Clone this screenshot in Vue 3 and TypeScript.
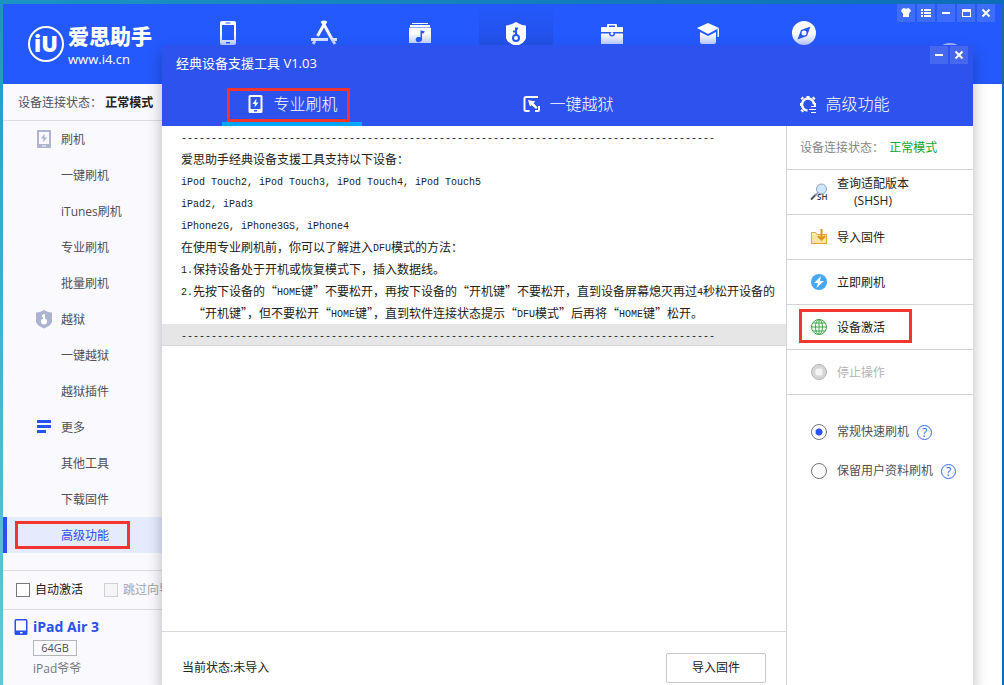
<script setup lang="ts">
import { ref } from 'vue'

interface SideItem {
  label: string
  icon?: 'flash' | 'shield' | 'more'
  active?: boolean
}

interface Run {
  text: string
  latin: boolean
}

const sideItems: SideItem[] = [
  { label: '刷机', icon: 'flash' },
  { label: '一键刷机' },
  { label: 'iTunes刷机' },
  { label: '专业刷机' },
  { label: '批量刷机' },
  { label: '越狱', icon: 'shield' },
  { label: '一键越狱' },
  { label: '越狱插件' },
  { label: '更多', icon: 'more' },
  { label: '其他工具' },
  { label: '下载固件' },
  { label: '高级功能', active: true },
]

const rule = '-'.repeat(89)
const logLines: string[] = [
  rule,
  '爱思助手经典设备支援工具支持以下设备：',
  'iPod Touch2, iPod Touch3, iPod Touch4, iPod Touch5',
  'iPad2, iPad3',
  'iPhone2G, iPhone3GS, iPhone4',
  '在使用专业刷机前，你可以了解进入DFU模式的方法：',
  '1.保持设备处于开机或恢复模式下，插入数据线。',
  '2.先按下设备的“HOME键”不要松开，再按下设备的“开机键”不要松开，直到设备屏幕熄灭再过4秒松开设备的',
  '  “开机键”，但不要松开“HOME键”，直到软件连接状态提示“DFU模式”后再将“HOME键”松开。',
  rule,
]

// Latin runs take a half-width face so that two letters equal one Chinese character.
function runs(line: string): Run[] {
  return (line.match(/[\x20-\x7e]+|[^\x20-\x7e]+/g) ?? []).map((text) => ({
    text,
    latin: /^[\x20-\x7e]/.test(text),
  }))
}

const mode = ref<'fast' | 'keep'>('fast')
const autoActivate = ref(false)
</script>

<template>
  <div class="desktop">
    <div class="window">
      <header class="topbar">
        <div class="brand">
          <span class="brand-mark">iU</span>
          <span class="brand-text">
            <strong>爱思助手</strong>
            <span>www.i4.cn</span>
          </span>
        </div>
        <nav class="topnav" aria-label="主导航">
          <button type="button" aria-label="设备">
            <svg viewBox="0 0 28 28">
              <defs>
                <linearGradient id="fade" x1="0" y1="0" x2="0" y2="28" gradientUnits="userSpaceOnUse">
                  <stop offset="0.5" stop-color="#fff" />
                  <stop offset="1" stop-color="#a9bdff" />
                </linearGradient>
              </defs>
              <path fill="url(#fade)" fill-rule="evenodd" d="M8 2h12q2 0 2 2v20q0 2-2 2H8q-2 0-2-2V4q0-2 2-2zM8 6v15h12V6zM11.500 3.500v1h5v-1zM12 23v1.500h4V23z" />
            </svg>
          </button>
          <button type="button" aria-label="应用">
            <svg viewBox="0 0 28 28" fill="none" stroke="url(#fade)" stroke-width="3">
              <path d="M12 2l11 20M16 2L7.500 17" />
              <path d="M1 20.500h17M22.500 20.500H27" />
              <path d="M5 22l-2 3" />
              <path d="M23 22l2 3" />
            </svg>
          </button>
          <button type="button" aria-label="音乐">
            <svg viewBox="0 0 28 28" fill="url(#fade)">
              <path d="M6 4h16v1H6zM4 6h20v2H4z" />
              <path fill-rule="evenodd" d="M4 8.500h20q1 0 1 1V24H3V9.500q0-1 1-1zM14.500 11v7.300a3.200 2.700 0 1 0 1.500 2.200V14.500q2 .2 2.500-1.500V12q-3 0-4-1z" />
            </svg>
          </button>
          <button type="button" class="current" aria-label="刷机越狱">
            <svg viewBox="0 0 28 28">
              <path fill="#fff" d="M14 3q6 3.500 10 3.500V19q-1 5-10 8Q5 24 4 19V6.500Q8 6.500 14 3z" />
              <circle cx="14" cy="19" r="3" fill="none" stroke="#2458f4" stroke-width="2" />
              <path d="M14 16V8.500M14 9.500h2M14 12.500h-3" fill="none" stroke="#2458f4" stroke-width="2" />
            </svg>
          </button>
          <button type="button" aria-label="工具箱">
            <svg viewBox="0 0 28 28" fill="url(#fade)">
              <path fill-rule="evenodd" d="M9 8V6q0-1 1-1h8q1 0 1 1v2h5q1 0 1 1v4H3V9q0-1 1-1zM11 8h6V6.500h-6z" />
              <path d="M3 14.500h8a3 3 0 0 0 6 0h8V25H3z" />
              <circle cx="14" cy="14.500" r="1.500" />
            </svg>
          </button>
          <button type="button" aria-label="教程">
            <svg viewBox="0 0 28 28" fill="url(#fade)">
              <path d="M14 4l11 5-11 6L3 9z" />
              <path d="M6 13l8 4 8-4v10q0 2-2 2H8q-2 0-2-2z" />
              <path d="M23.500 9.500H25V18h-1.500z" />
            </svg>
          </button>
          <button type="button" aria-label="浏览">
            <svg viewBox="0 0 28 28">
              <circle cx="14" cy="14" r="12" fill="url(#fade)" />
              <path fill="#2858f8" fill-rule="evenodd" d="M20.500 7.500L17 17l-9.500 3.500L11 11zM14 11.500a2.500 2.500 0 1 0 0 5 2.500 2.500 0 0 0 0-5z" />
            </svg>
          </button>
        </nav>
        <div class="topbar-end">
          <div class="controls">
            <button type="button" aria-label="皮肤">
              <svg viewBox="0 0 18 18"><path fill="#fff" d="M5 5l2-1q2 1.500 4 0l2 1 1 2-2 2.500V13H6V9.500L4 7z" /></svg>
            </button>
            <button type="button" aria-label="菜单">
              <svg viewBox="0 0 18 18"><path fill="#fff" d="M4 5h2v2H4zM7 5h7v2H7zM4 8h2v2H4zM7 8h7v2H7zM4 11h2v2H4zM7 11h7v2H7z" /></svg>
            </button>
            <button type="button" aria-label="最小化">
              <svg viewBox="0 0 18 18"><path fill="#fff" d="M5 8h8v2H5z" /></svg>
            </button>
            <button type="button" aria-label="最大化">
              <svg viewBox="0 0 18 18"><path fill="#fff" fill-rule="evenodd" d="M5 5h9v8H5zM6 8v4h7V8z" /></svg>
            </button>
            <button type="button" aria-label="关闭">
              <svg viewBox="0 0 18 18"><path stroke="#fff" stroke-width="2" d="M5.500 5.500l7 7M12.500 5.500l-7 7" /></svg>
            </button>
          </div>
          <button type="button" class="download" aria-label="下载">
            <svg viewBox="0 0 32 32" fill="none" stroke="#9db4ff" stroke-width="2"><circle cx="16" cy="16" r="14" /><path d="M16 9v13M11 17l5 5 5-5" /></svg>
          </button>
        </div>
      </header>

      <aside class="sidebar">
        <p class="side-status">设备连接状态： <strong>正常模式</strong></p>
        <nav class="side-nav" aria-label="功能">
          <a v-for="item in sideItems" :key="item.label" href="#" :class="{ active: item.active }">
            <span class="side-icon">
              <svg v-if="item.icon === 'flash'" viewBox="0 0 18 20">
                <path fill="#adb4d2" fill-rule="evenodd" d="M3 1h12q1 0 1 1v16q0 1-1 1H3q-1 0-1-1V2q0-1 1-1zM4 3v12h10V3zM7 16.500v1h4v-1z" />
                <path fill="#adb4d2" d="M9.500 4.500L6 9.500h2.500L8 13.500l4-5H9.500z" />
              </svg>
              <svg v-else-if="item.icon === 'shield'" viewBox="0 0 18 20">
                <path fill="#adb4d2" d="M9 1q4 2.500 8 2.500V13q-1 3.500-8 6.500Q2 16.500 1 13V3.500Q5 3.500 9 1z" />
                <circle cx="9" cy="12.500" r="3" fill="#fff" />
                <path fill="#fff" d="M8 5h2v6H8zM7 6h1v2H7z" />
              </svg>
              <svg v-else-if="item.icon === 'more'" viewBox="0 0 18 20">
                <path fill="#2554f0" d="M2 3h14v3H2zM2 8h14v3H2zM2 13h9v3H2z" />
              </svg>
            </span>
            <span class="side-label">{{ item.label }}</span>
          </a>
        </nav>
        <div class="side-options">
          <label><input v-model="autoActivate" type="checkbox" />自动激活</label>
          <label class="off"><input type="checkbox" disabled />跳过向导</label>
        </div>
        <div class="device">
          <svg viewBox="0 0 14 18"><path fill="#2a50ee" fill-rule="evenodd" d="M2 1h10q1.500 0 1.500 1.500v13Q13.500 17 12 17H2Q.5 17 .5 15.500v-13Q.5 1 2 1zM2 2.500v10h10v-10zM6 14v1.500h2.500V14z" /></svg>
          <strong>iPad Air 3</strong>
          <span class="capacity">64GB</span>
          <span class="owner">iPad爷爷</span>
        </div>
      </aside>
    </div>

    <section class="dialog" role="dialog" aria-label="经典设备支援工具">
      <header class="dialog-head">
        <div class="dialog-title">
          <h1>经典设备支援工具 V1.03</h1>
          <div class="controls">
            <button type="button" aria-label="最小化窗口">
              <svg viewBox="0 0 18 18"><path fill="#fff" d="M5 8h8v2H5z" /></svg>
            </button>
            <button type="button" aria-label="关闭窗口">
              <svg viewBox="0 0 18 18"><path stroke="#fff" stroke-width="2" d="M5.500 5.500l7 7M12.500 5.500l-7 7" /></svg>
            </button>
          </div>
        </div>
        <nav class="tabs" aria-label="工具">
          <button type="button" class="selected">
            <svg viewBox="0 0 18 18">
              <path fill="#fff" fill-rule="evenodd" d="M4 0h11q1.500 0 1.500 1.500v15Q16.500 18 15 18H4q-1.500 0-1.500-1.500v-15Q2.500 0 4 0zM4.500 2v12H14.500V2zM8 15v1.500h3V15z" />
              <path fill="#fff" d="M10.500 3.500L6.500 9H9l-.5 3.500 4-5H10z" />
            </svg>
            专业刷机
          </button>
          <button type="button">
            <svg viewBox="0 0 18 18">
              <path fill="none" stroke="#fff" stroke-width="2" d="M16 2H4Q2.500 2 2.500 3.500v11Q2.500 16 4 16H7.500M13 16h3q1 0 1-1.500V11" />
              <path fill="#fff" d="M6 5l7.500 1.500-2 1.500 4 4.500-1.500 1.500-4.500-4L8 11.500z" />
            </svg>
            一键越狱
          </button>
          <button type="button">
            <svg viewBox="0 0 18 18">
              <path fill="none" stroke="#fff" stroke-width="2.500" d="M9.500 15.500A6 6 0 1 1 16 9.500" />
              <path fill="none" stroke="#fff" stroke-width="3" d="M10 1v3M5 4L3.500 2.500M2 9.500h3M3.500 16.500L5 15M15 4l1.500-1.500M18 9.500h-2" />
              <path fill="#fff" d="M13 11h5v1h-5zM11 14h7v1h-7zM13 17h5v1h-5z" />
            </svg>
            高级功能
          </button>
        </nav>
      </header>

      <main class="console">
        <div class="log">
          <p v-for="(line, i) in logLines" :key="i" :class="{ marked: i === logLines.length - 1 }"><span v-for="(run, j) in runs(line)" :key="j" :class="{ latin: run.latin }">{{ run.text }}</span></p>
        </div>
        <footer class="console-foot">
          <span>当前状态:未导入</span>
          <button type="button">导入固件</button>
        </footer>
      </main>

      <aside class="actions">
        <p class="action-status">设备连接状态： <b>正常模式</b></p>
        <button type="button" class="action">
          <svg viewBox="0 0 18 18">
            <path stroke="#4c5866" stroke-width="2" d="M1 16.500l5-5" />
            <path stroke="#8996a5" stroke-width="1.500" d="M5 12.500l3-3" />
            <circle cx="11.500" cy="6" r="5" fill="#cfe6fa" stroke="#92a5b8" />
            <text x="7" y="17" class="sh-text">SH</text>
          </svg>
          <span>查询适配版本<br />(SHSH)</span>
        </button>
        <button type="button" class="action">
          <svg viewBox="0 0 18 18">
            <path fill="#fbe3a0" stroke="#dfa73a" d="M1.500 4.500h4l1.500 2h9.500v9h-15z" />
            <path fill="#fff1c9" d="M2 5h3v2H2z" />
            <path fill="none" stroke="#d8961f" stroke-width="2" d="M11.500 1v9M8 8l3.500 3.500L15 8" />
          </svg>
          <span>导入固件</span>
        </button>
        <button type="button" class="action">
          <svg viewBox="0 0 18 18">
            <circle cx="9" cy="9" r="8" fill="#45a7f5" />
            <path fill="#fff" d="M11 3L4 10h4l-1.500 5L14 8h-4z" />
          </svg>
          <span>立即刷机</span>
        </button>
        <button type="button" class="action boxed">
          <svg viewBox="0 0 18 18" fill="none" stroke="#3fa648">
            <circle cx="9" cy="9" r="7.500" />
            <ellipse cx="9" cy="9" rx="3.500" ry="7.500" />
            <path d="M9 1.500v15M1.500 9h15M3 5h12M3 13h12" />
          </svg>
          <span>设备激活</span>
        </button>
        <button type="button" class="action" disabled>
          <svg viewBox="0 0 18 18">
            <circle cx="9" cy="9" r="7.500" fill="#d6d6d6" stroke="#b5b5b5" />
            <rect x="5.500" y="5.500" width="7" height="7" rx="2" fill="#f4f4f4" />
          </svg>
          <span>停止操作</span>
        </button>
        <div class="modes">
          <div class="mode">
            <label><input v-model="mode" type="radio" name="mode" value="fast" />常规快速刷机</label>
            <button type="button" class="help" aria-label="常规快速刷机说明">?</button>
          </div>
          <div class="mode">
            <label><input v-model="mode" type="radio" name="mode" value="keep" />保留用户资料刷机</label>
            <button type="button" class="help" aria-label="保留用户资料刷机说明">?</button>
          </div>
        </div>
      </aside>
    </section>
  </div>
</template>

<style>
html,
body,
#app {
  height: 100%;
}

body {
  margin: 0;
  overflow: hidden;
}
</style>

<style scoped>
*,
*::after {
  box-sizing: border-box;
}

p,
h1 {
  margin: 0;
}

button {
  padding: 0;
  border: 0;
  background: none;
  color: inherit;
  font: inherit;
}

svg {
  display: block;
  flex: none;
}

.desktop {
  position: relative;
  height: 100%;
  padding: 4px 2px 0 3px;
  overflow: hidden;
  background:
    linear-gradient(90deg, transparent 50%, #1c68ab 50%) 0 4px no-repeat,
    linear-gradient(90deg, #1a93c4, #0c6db9) 0 0 / 100% 4px no-repeat,
    linear-gradient(#1a93c4, #34a6cc 25%, #68c4dc);
  color: #505058;
  font: 12px/18px 'Open Sans', 'Noto Sans CJK SC', sans-serif;
}

.window {
  display: flex;
  flex-direction: column;
  height: 100%;
  background: #fff;
}

.topbar {
  display: flex;
  flex: none;
  height: 80px;
  background: #2459fd;
  color: #fff;
}

.brand {
  display: flex;
  flex: none;
  align-items: center;
  gap: 4px;
  width: 188px;
  padding-left: 25px;
}

.brand-mark {
  width: 36px;
  height: 36px;
  border: 2px solid #fff;
  border-radius: 50%;
  font-size: 22px;
  font-weight: 800;
  line-height: 31px;
  text-align: center;
}

.brand-text {
  display: flex;
  flex-direction: column;
  font-size: 13px;
  line-height: 18px;
  white-space: nowrap;
}

.brand-text strong {
  font-family: 'Noto Sans CJK SC', sans-serif;
  font-size: 21px;
  font-weight: 900;
  line-height: 30px;
}

.topnav {
  display: flex;
  flex: none;
  gap: 22px;
}

.topnav button {
  width: 74px;
  padding-top: 15px;
}

.topnav button.current {
  background: linear-gradient(#2459fd, #2350e6 41px);
}

.topnav button,
.topbar-end,
.controls button {
  display: flex;
  flex-direction: column;
  align-items: center;
}

.topnav svg {
  width: 28px;
  height: 28px;
}

.topbar-end {
  flex: 1;
  align-items: flex-end;
  padding-right: 7px;
}

.controls {
  display: flex;
  gap: 2px;
}

.controls button {
  width: 18px;
  height: 18px;
  background: rgba(255, 255, 255, 0.12);
}

.controls svg {
  width: 18px;
  height: 18px;
}

.download {
  margin: 20px 29px 0 0;
}

.download svg {
  width: 32px;
  height: 32px;
}

.sidebar {
  display: flex;
  flex: 1;
  flex-direction: column;
  width: 200px;
  background: #f9f9fe;
}

.side-status {
  height: 37px;
  padding-left: 15px;
  border-bottom: 1px solid #dcdce2;
  line-height: 37px;
  white-space: nowrap;
}

.side-status strong {
  color: #222;
}

.side-nav {
  padding-bottom: 17px;
}

.side-nav a {
  display: flex;
  align-items: center;
  height: 36px;
  color: inherit;
  text-decoration: none;
}

.side-nav a.active {
  position: relative;
  background: #e5ebfd;
  color: #2a50ee;
  box-shadow: inset 4px 0 #2a50ee;
}

.side-nav a.active::after {
  position: absolute;
  top: 4px;
  left: 12px;
  width: 115px;
  height: 28px;
  border: 3px solid #f2352e;
  content: '';
}

.side-icon {
  width: 58px;
  padding-left: 32px;
}

.side-icon svg {
  width: 18px;
  height: 20px;
}

.side-label {
  line-height: 20px;
  padding-top: 2px;
}

.side-options {
  display: flex;
  align-items: center;
  gap: 21px;
  height: 40px;
  padding-left: 13px;
  border: solid #dcdce2;
  border-width: 1px 0;
  color: #222;
  white-space: nowrap;
}

.side-options label {
  display: flex;
  align-items: center;
  gap: 5px;
}

.side-options .off {
  color: #a4a4ac;
}

.side-options input {
  appearance: none;
  width: 14px;
  height: 14px;
  margin: 0;
  border: 1px solid #777;
  background: #fff;
}

.side-options input:disabled {
  border-color: #d0d0d6;
  background: #f5f5f8;
}

.side-options input:checked {
  background: #2a50ee;
}

.device {
  display: grid;
  grid-template-columns: 14px max-content;
  grid-template-rows: 18px 16px 18px;
  gap: 4px 5px;
  align-items: center;
  padding: 8px 0 0 11px;
}

.device svg {
  width: 14px;
  height: 18px;
}

.device strong {
  color: #2a50ee;
  font-size: 14px;
}

.capacity {
  grid-column: 2;
  width: 44px;
  border: 1px solid #b4b4ba;
  font-size: 11px;
  line-height: 14px;
  text-align: center;
}

.owner {
  grid-column: 2;
  color: #777780;
}

.dialog {
  position: absolute;
  inset: 45px 31px 0 162px;
  display: grid;
  grid-template: auto 1fr / 1fr 187px;
  background: #fff;
  box-shadow: 0 8px 14px rgba(0, 0, 0, 0.28);
}

.dialog-head {
  grid-column: 1 / -1;
  background: #2d52ed;
  color: #fff;
}

.dialog-title {
  display: flex;
  justify-content: space-between;
  height: 36px;
  padding: 1px 5px 0 14px;
}

.dialog-title h1 {
  font-size: 13px;
  font-weight: 400;
  line-height: 34px;
}

.tabs {
  display: flex;
  justify-content: space-between;
  padding: 0 59px 0 60px;
}

.tabs button {
  display: flex;
  align-items: center;
  justify-content: center;
  gap: 9px;
  position: relative;
  width: 140px;
  height: 45px;
  font-size: 16px;
  font-weight: 300;
}

.tabs svg {
  width: 18px;
  height: 18px;
}

.tabs .selected {
  box-shadow: inset 0 -4px #00a8fb;
}

.tabs .selected::after {
  position: absolute;
  top: 7px;
  left: 5px;
  width: 123px;
  height: 34px;
  border: 3px solid #f2352e;
  content: '';
}

.console {
  display: flex;
  flex-direction: column;
  min-width: 0;
}

.log {
  flex: 1;
  overflow: hidden;
  color: #222;
  font-family: 'Noto Sans CJK SC', sans-serif;
}

.log p {
  height: 22px;
  padding-left: 19px;
  line-height: 22px;
  white-space: pre;
}

.log .latin {
  font-family: 'Liberation Mono', monospace;
  font-size: 10px;
  line-height: 18px;
  vertical-align: 1px;
}

.log .marked {
  background: #e6e6e6;
  box-shadow: inset 0 -1px #d8d8d8;
}

.console-foot {
  display: flex;
  align-items: center;
  justify-content: space-between;
  height: 54px;
  padding: 19px 20px 0;
  border-top: 1px solid #d8d8dc;
  color: #222;
}

.console-foot button {
  width: 100px;
  height: 30px;
  border: 1px solid #c8c8cc;
  border-radius: 2px;
}

.actions {
  border-left: 1px solid #d4d4d8;
}

.action-status {
  height: 44px;
  padding-left: 13px;
  border-bottom: 1px solid #d4d4d8;
  color: #888;
  line-height: 43px;
  white-space: nowrap;
}

.action-status b {
  margin-left: 2px;
  color: #14a52c;
  font-weight: 400;
}

.action {
  display: flex;
  align-items: center;
  gap: 9px;
  position: relative;
  width: 100%;
  height: 45px;
  padding-left: 23px;
  border-bottom: 1px solid #d4d4d8;
  color: #222;
  line-height: 17px;
}

.action:disabled {
  color: #b4b4b4;
}

.action svg {
  width: 18px;
  height: 18px;
}

.sh-text {
  fill: #333;
  font-size: 8px;
  font-weight: 600;
}

.boxed::after {
  position: absolute;
  top: 4px;
  left: 12px;
  width: 113px;
  height: 34px;
  border: 3px solid #f2352e;
  content: '';
}

.modes {
  display: grid;
  gap: 21px;
  padding: 28px 0 0 24px;
}

.mode,
.mode label {
  display: flex;
  align-items: center;
  gap: 8px;
  white-space: nowrap;
}

.mode label {
  gap: 10px;
}

.mode input {
  appearance: none;
  width: 16px;
  height: 16px;
  margin: 0;
  border: 1px solid #777;
  border-radius: 50%;
  background: #fff;
}

.mode input:checked {
  background: radial-gradient(circle, #2a50ee 3px, #fff 4px);
}

.help {
  width: 15px;
  height: 15px;
  border: 1px solid #2f6ae8;
  border-radius: 50%;
  color: #2f6ae8;
  font-size: 12px;
  line-height: 13px;
  text-align: center;
}
</style>
